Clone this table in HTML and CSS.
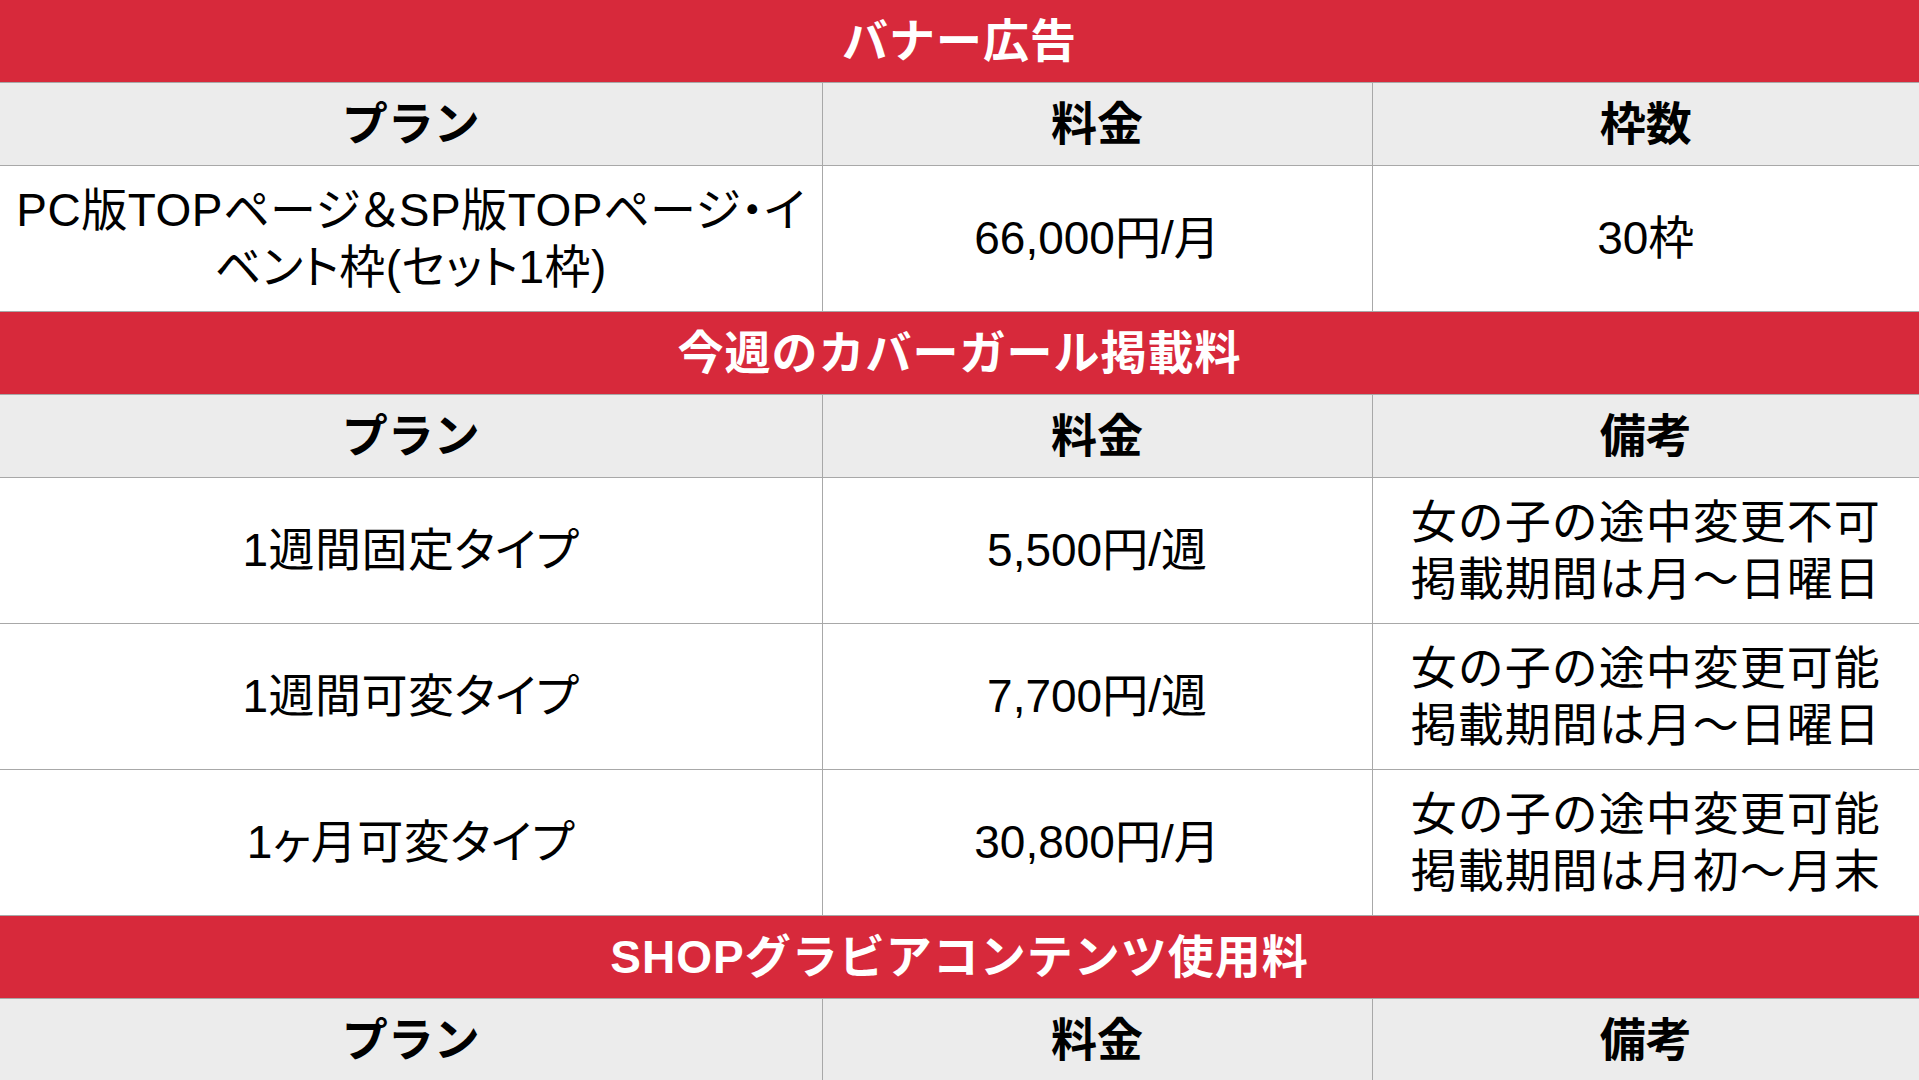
FILE: index.html
```html
<!DOCTYPE html>
<html lang="ja">
<head>
<meta charset="utf-8">
<title>料金表</title>
<link rel="stylesheet" href="styles.css">
</head>
<body>
<table class="price">
  <colgroup>
    <col class="c-plan">
    <col class="c-fee">
    <col class="c-note">
  </colgroup>
  <tbody>
    <tr class="sec"><td colspan="3">バナー広告</td></tr>
    <tr class="head"><th>プラン</th><th>料金</th><th>枠数</th></tr>
    <tr class="row"><td class="plan">PC版TOPページ＆SP版TOPページ・イ<br>ベント枠(セット1枠)</td><td>66,000円/月</td><td>30枠</td></tr>
    <tr class="sec"><td colspan="3">今週のカバーガール掲載料</td></tr>
    <tr class="head"><th>プラン</th><th>料金</th><th>備考</th></tr>
    <tr class="row"><td class="plan">1週間固定タイプ</td><td>5,500円/週</td><td class="note">女の子の途中変更不可<br>掲載期間は月～日曜日</td></tr>
    <tr class="row"><td class="plan">1週間可変タイプ</td><td>7,700円/週</td><td class="note">女の子の途中変更可能<br>掲載期間は月～日曜日</td></tr>
    <tr class="row"><td class="plan">1ヶ月可変タイプ</td><td>30,800円/月</td><td class="note">女の子の途中変更可能<br>掲載期間は月初～月末</td></tr>
    <tr class="sec"><td colspan="3">SHOPグラビアコンテンツ使用料</td></tr>
    <tr class="head"><th>プラン</th><th>料金</th><th>備考</th></tr>
  </tbody>
</table>
</body>
</html>
```
FILE: styles.css
```css
html, body {
  margin: 0;
  padding: 0;
  background: #ffffff;
}
body {
  font-family: "Liberation Sans", "Noto Sans CJK JP", sans-serif;
  color: #000;
  overflow: hidden;
}
.price {
  width: 1919px;
  border-collapse: collapse;
  table-layout: fixed;
}
.c-plan { width: 822px; }
.c-fee { width: 550px; }
.c-note { width: 547px; }
.price td, .price th {
  border: 1px solid #a8a8a8;
  text-align: center;
  vertical-align: middle;
  padding: 0;
  font-size: 46px;
  line-height: 57px;
}
.sec td {
  background: #d7293b;
  color: #ffffff;
  font-weight: bold;
  height: 82px;
  letter-spacing: 1px;
  border-left: none;
  border-right: none;
}
.sec:first-child td {
  border-top: none;
}
.head th {
  background: #ececec;
  font-weight: bold;
  height: 82px;
}
.row td {
  background: #ffffff;
  height: 145px;
  font-weight: normal;
}
.price tr > :first-child { border-left: none; }
.price tr > :last-child { border-right: none; }
.plan {
  font-feature-settings: "palt" 1;
  letter-spacing: 0.5px;
}
.note {
  letter-spacing: 1px;
}
```
